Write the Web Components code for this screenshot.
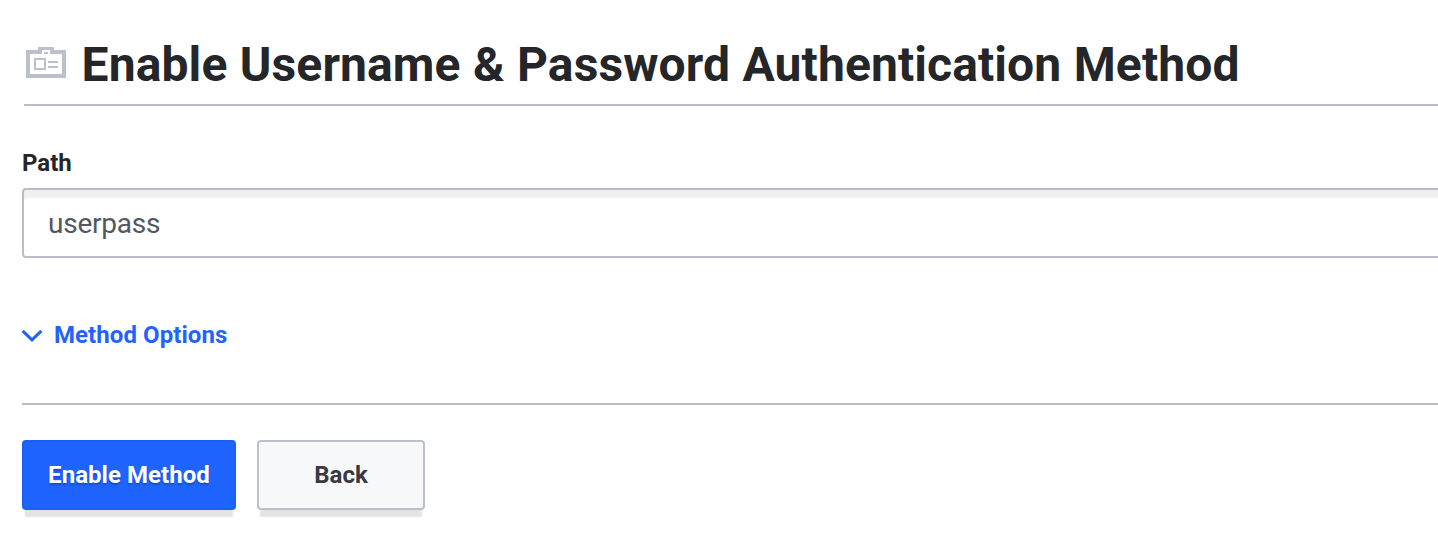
<!DOCTYPE html>
<html lang="en"><head><meta charset="utf-8"><title>Enable Method</title>
<style>html,body{margin:0;background:#fff;overflow:hidden}body{font-family:Roboto,sans-serif;color:#252629}</style></head><body>
<auth-page></auth-page>
<script>
const define=(name,html)=>customElements.define(name,class extends HTMLElement{constructor(){super();this.attachShadow({mode:'open'}).innerHTML=html}});
define('page-title',`<style>:host{display:flex;align-items:flex-start;gap:16px;height:67px;margin-left:2px;padding-top:37px;border-bottom:2px solid #babccc;box-sizing:content-box}svg{width:40px;height:32px;margin:9px 0 0 2px;flex:none;display:block}h1{margin:0 0 0 -.4px;font-size:48px;line-height:56px;font-weight:700;white-space:nowrap;letter-spacing:.1px;word-spacing:.4px}</style>
<svg viewBox="0 0 40 32" fill="#bac1cc" shape-rendering="crispEdges"><path fill-rule="evenodd" d="M0 4h12V1h16v3h12v28H0zM4 8v20h32V8H24V4h-8v4z"/><path d="M18 6h4v2h-4zM22 15h10v2H22zM22 20h10v2H22z"/><path fill-rule="evenodd" d="M8 12h12v12H8zM10 14v8h8v-8z"/></svg><h1><slot></slot></h1>`);
define('text-field',`<style>:host{display:block;padding-top:42px}label{display:block;font-size:24px;line-height:30px;font-weight:700;margin-bottom:10px}.box{box-sizing:border-box;height:70px;width:1450px;border:2px solid #babccc;border-radius:4px;box-shadow:inset 0 8px 2px 0 #f0f0f0;padding:1px 24px 0;font-size:28px;line-height:66px;color:#525761;letter-spacing:-.22px}</style><label><slot name="label"></slot></label><div class="box"><slot></slot></div>`);
define('options-toggle',`<style>:host{display:flex;align-items:center;gap:11px;height:30px;margin-top:62px;color:#1f64ff;font-size:24px;font-weight:700;letter-spacing:.07px}svg{display:block;width:21px;height:14px;overflow:visible}</style><svg viewBox="0 0 21 14" fill="none" stroke="currentColor" stroke-width="3"><path d="M.6 2.8l9.4 9L19.4 2.8"/></svg><span><slot></slot></span>`);
define('action-button',`<style>:host{display:flex;box-sizing:border-box;height:70px;width:168px;align-items:center;justify-content:center;border:2px solid #bac1cc;border-radius:4px;background:#f7f8fa;color:#373a42;font-size:24px;font-weight:700;box-shadow:0 10px 2px -3px #e3e3e3}:host([primary]){width:214px;background:#1f64ff;border-color:#1c5ff8;color:#fff;text-shadow:0 2px 2px #174bcc;letter-spacing:.05px}</style><slot></slot>`);
define('auth-page',`<style>:host{display:block;width:1416px;height:546px;padding-left:22px}footer{display:flex;gap:21px;border-top:2px solid #babccc;margin-top:53px;padding-top:35px}</style><page-title>Enable Username &amp; Password Authentication Method</page-title><text-field><span slot="label">Path</span>userpass</text-field><options-toggle>Method Options</options-toggle><footer><action-button primary>Enable Method</action-button><action-button>Back</action-button></footer>`);
</script></body></html>
